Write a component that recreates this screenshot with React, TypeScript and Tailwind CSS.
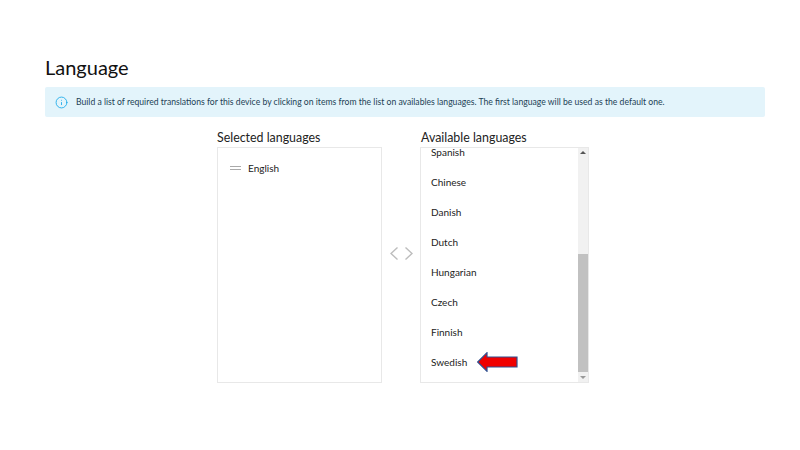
import { Info } from 'lucide-react';

const available = ['Spanish', 'Chinese', 'Danish', 'Dutch', 'Hungarian', 'Czech', 'Finnish', 'Swedish'];

const App = () => {
  return (
    <div className="w-[800px] h-[450px] bg-white px-[45px] pt-[54px] font-['Lato','Liberation_Sans',sans-serif] overflow-hidden">
      <h1 className="text-[20px] leading-[27px] text-[#111] mb-[6px]">Language</h1>

      <div className="w-[720px] h-[30px] bg-[#e3f4fb] flex items-center pl-[10px] rounded-[2px]">
        <Info className="w-[13px] h-[13px] text-[#0ea5e9] mr-[8px]" strokeWidth={1.5} />
        <p className="text-[8.63px] text-[#1c3f55]">
          Build a list of required translations for this device by clicking on items from the list on availables languages. The first language will be used as the default one.
        </p>
      </div>

      <div className="flex ml-[172px] mt-[12px]">
        <div className="w-[165px]">
          <h2 className="text-[12.4px] leading-[17px] mb-px text-[#222]">Selected languages</h2>
          <div className="h-[236px] border border-[#e8e8e8] pt-[10px] pl-[12px]">
            <div className="flex items-center h-[20px] text-[10px] text-[#222]">
              <div className="w-[11px] h-[4px] border-y border-[#aaa] mr-[7px]" />
              English
            </div>
          </div>
        </div>

        <div className="w-[38px] flex items-center justify-center gap-[7px] pb-[6px]">
          <svg className="w-[8px] h-[13px]" viewBox="0 0 8 13" fill="none" stroke="#bdbdbd" strokeWidth="1.4">
            <path d="M7.5 0.5 L1 6.5 L7.5 12.5" />
          </svg>
          <svg className="w-[8px] h-[13px]" viewBox="0 0 8 13" fill="none" stroke="#bdbdbd" strokeWidth="1.4">
            <path d="M0.5 0.5 L7 6.5 L0.5 12.5" />
          </svg>
        </div>

        <div className="w-[169px]">
          <h2 className="text-[12.4px] leading-[17px] mb-px pl-px text-[#222]">Available languages</h2>
          <div className="h-[236px] border border-[#e8e8e8] flex overflow-hidden">
            <ul className="flex-1 -mt-[11px] pl-[10px] relative">
              {available.map((name) => (
                <li key={name} className="h-[30px] flex items-center text-[10px] text-[#222]">
                  {name}
                </li>
              ))}
              <svg className="absolute left-[56px] top-[215px] w-[41px] h-[20px]" viewBox="0 0 41 20">
                <path d="M0.7 10 L10 0.7 V5 H40 V15 H10 V19.3 Z" fill="#f00000" stroke="#2f4f8f" strokeWidth="1.2" />
              </svg>
            </ul>
            <div className="w-[10px] bg-[#f1f1f1] flex flex-col">
              <div className="h-[106px] flex justify-center pt-[3px]">
                <div className="w-0 h-0 border-x-[3px] border-x-transparent border-b-[3px] border-b-[#555]" />
              </div>
              <div className="h-[118px] bg-[#c1c1c1]" />
              <div className="flex justify-center pt-[4px]">
                <div className="w-0 h-0 border-x-[3px] border-x-transparent border-t-[3px] border-t-[#999]" />
              </div>
            </div>
          </div>
        </div>
      </div>
    </div>
  );
};

export default App;
